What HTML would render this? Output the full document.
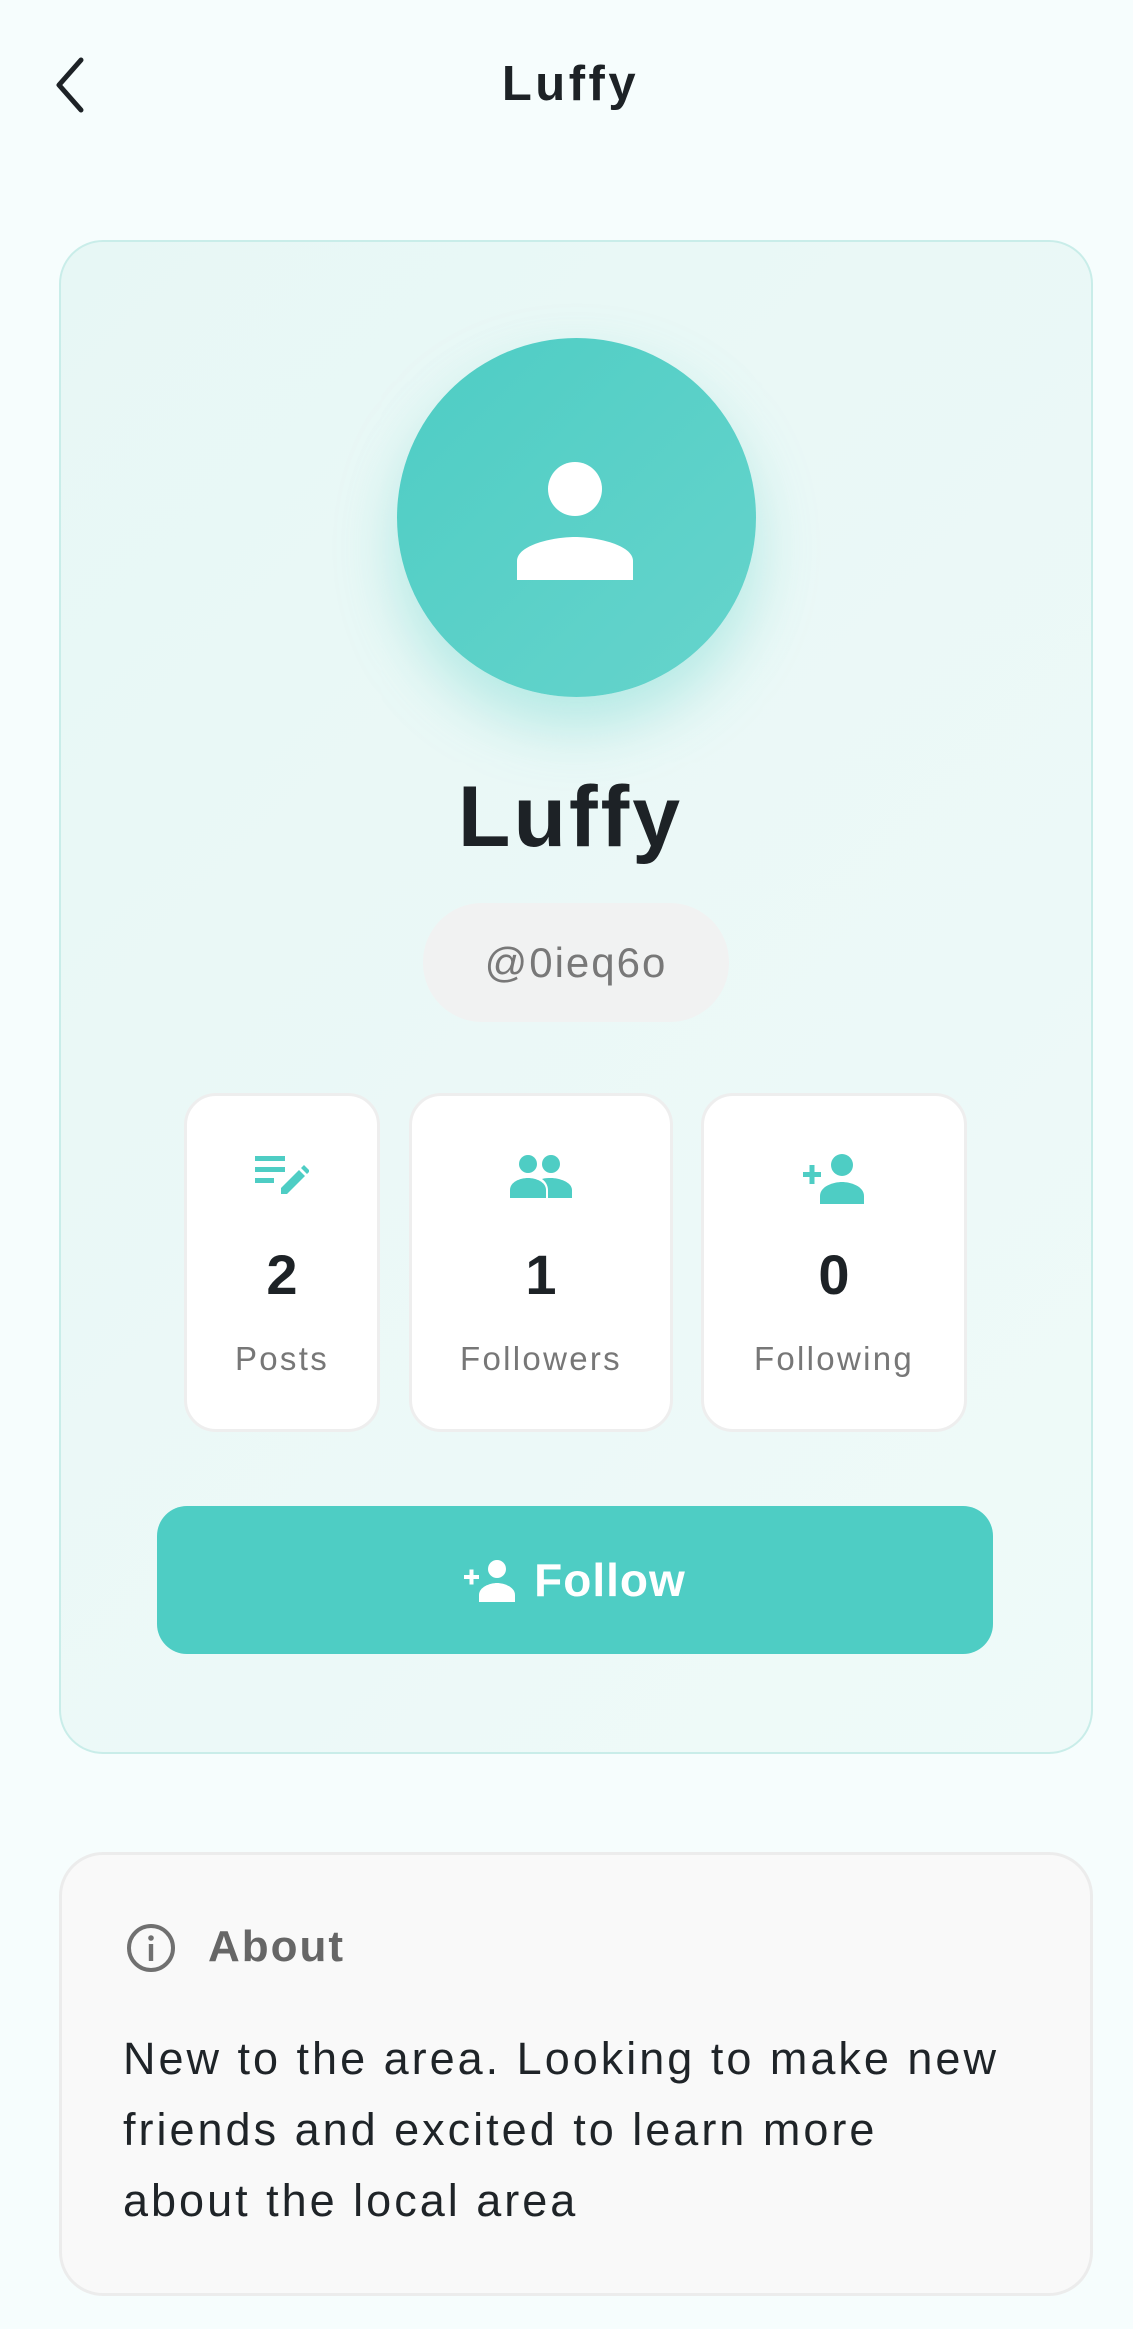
<!DOCTYPE html>
<html><head><meta charset="utf-8"><style>
*{box-sizing:border-box;margin:0;padding:0}
body{width:1133px;height:2329px;background:#f6fdfd;font-family:"Liberation Sans",sans-serif;position:relative;overflow:hidden}
.abs{position:absolute}
.title{left:4px;width:1133px;top:56px;text-align:center;font-size:49px;font-weight:bold;color:#1d2226;letter-spacing:3.5px}
.card{left:59px;top:240px;width:1034px;height:1514px;border:2px solid #c9ede9;border-radius:44px;background:linear-gradient(135deg,#e7f7f5,#effaf9)}
.avatar{left:397px;top:338px;width:359px;height:359px;border-radius:50%;background:linear-gradient(135deg,#4ecdc4,#66d4cc);box-shadow:0 30px 60px rgba(78,205,196,0.35)}
.name{left:4px;width:1133px;top:768px;text-align:center;font-size:86px;font-weight:bold;color:#1d2226;letter-spacing:3px}
.handle{left:423px;top:903px;width:306px;height:119px;border-radius:59px;background:#f1f2f2;text-align:center;line-height:119px;font-size:42px;color:#787878;letter-spacing:2px}
.stat{top:1093px;height:339px;background:#fff;border:3px solid #eeeeee;border-radius:32px;text-align:center}
.stat svg{position:absolute;left:50%;top:58px;transform:translateX(-50%)}
.num{position:absolute;left:0;right:0;top:146px;font-size:56px;font-weight:bold;color:#1d2226}
.lab{position:absolute;left:0;right:0;top:244px;font-size:33px;color:#777;letter-spacing:2.3px}
.btn{left:157px;top:1506px;width:836px;height:148px;border-radius:30px;background:#4ecdc4;color:#fff;font-size:46px;font-weight:bold;text-align:center;line-height:148px;letter-spacing:1px}
.about{left:59px;top:1852px;width:1034px;height:444px;border:3px solid #ececec;border-radius:44px;background:#f9f9f9}
.ah{left:208px;top:1922px;font-size:44px;font-weight:bold;color:#666;letter-spacing:2px}
.body{left:123px;top:2023px;width:890px;font-size:45px;line-height:71px;color:#1f2428;letter-spacing:3px}
</style></head><body>
<svg class="abs" style="left:50px;top:54px" width="40" height="62" viewBox="0 0 40 62"><path d="M31 6 L9 31 L31 56" fill="none" stroke="#1d2226" stroke-width="5" stroke-linecap="round" stroke-linejoin="round"/></svg>
<div class="abs title">Luffy</div>
<div class="abs card"></div>
<div class="abs avatar"></div>
<svg class="abs" style="left:515px;top:461px" width="120" height="120" viewBox="0 0 120 120"><circle cx="60" cy="28" r="27" fill="#fff"/><path d="M2 119 V100 C2 84 38 76 60 76 C82 76 118 84 118 100 V119 Z" fill="#fff"/></svg>
<div class="abs name">Luffy</div>
<div class="abs handle">@0ieq6o</div>
<div class="abs stat" style="left:184px;width:196px">
<svg width="54" height="44" viewBox="0 0 54 44"><rect x="0" y="2" width="30" height="5" fill="#4ecdc4"/><rect x="0" y="13" width="30" height="5" fill="#4ecdc4"/><rect x="0" y="24" width="19" height="5" fill="#4ecdc4"/><path d="M26 40 L26 34 L44 16 L50 22 L32 40 Z M46 14 L49 11 L55 17 L52 20 Z" fill="#4ecdc4"/></svg>
<div class="num">2</div><div class="lab">Posts</div></div>
<div class="abs stat" style="left:409px;width:264px">
<svg width="62" height="44" viewBox="0 0 62 44"><circle cx="18" cy="10" r="9" fill="#4ecdc4"/><circle cx="41" cy="10" r="9" fill="#4ecdc4"/><path d="M0 44 V36 C0 28 10 24 18 24 C26 24 36 28 36 36 V44 Z" fill="#4ecdc4"/><path d="M38 44 V36 C38 31 35 27 32 25 C35 24 38 24 41 24 C49 24 62 28 62 36 V44 Z" fill="#4ecdc4"/></svg>
<div class="num">1</div><div class="lab">Followers</div></div>
<div class="abs stat" style="left:701px;width:266px">
<svg width="62" height="50" viewBox="0 0 62 50"><rect x="0" y="18" width="18" height="5" fill="#4ecdc4"/><rect x="6.5" y="11" width="5" height="19" fill="#4ecdc4"/><circle cx="39" cy="11" r="11" fill="#4ecdc4"/><path d="M17 50 V42 C17 32 31 28 39 28 C47 28 61 32 61 42 V50 Z" fill="#4ecdc4"/></svg>
<div class="num">0</div><div class="lab">Following</div></div>
<div class="abs btn"><svg style="vertical-align:-6px;margin-right:18px" width="52" height="42" viewBox="0 0 52 42"><rect x="0" y="15" width="15" height="4" fill="#fff"/><rect x="5.5" y="9.5" width="4" height="15" fill="#fff"/><circle cx="33" cy="9" r="9" fill="#fff"/><path d="M15 42 V35 C15 27 26 23 33 23 C40 23 51 27 51 35 V42 Z" fill="#fff"/></svg>Follow</div>
<div class="abs about"></div>
<svg class="abs" style="left:126px;top:1923px" width="50" height="50" viewBox="0 0 50 50"><circle cx="25" cy="25" r="22" fill="none" stroke="#707070" stroke-width="4"/><circle cx="25" cy="15" r="2.8" fill="#707070"/><rect x="22.8" y="21" width="4.4" height="17" fill="#707070"/></svg>
<div class="abs ah">About</div>
<div class="abs body">New to the area. Looking to make new friends and excited to learn more about the local area</div>
</body></html>
